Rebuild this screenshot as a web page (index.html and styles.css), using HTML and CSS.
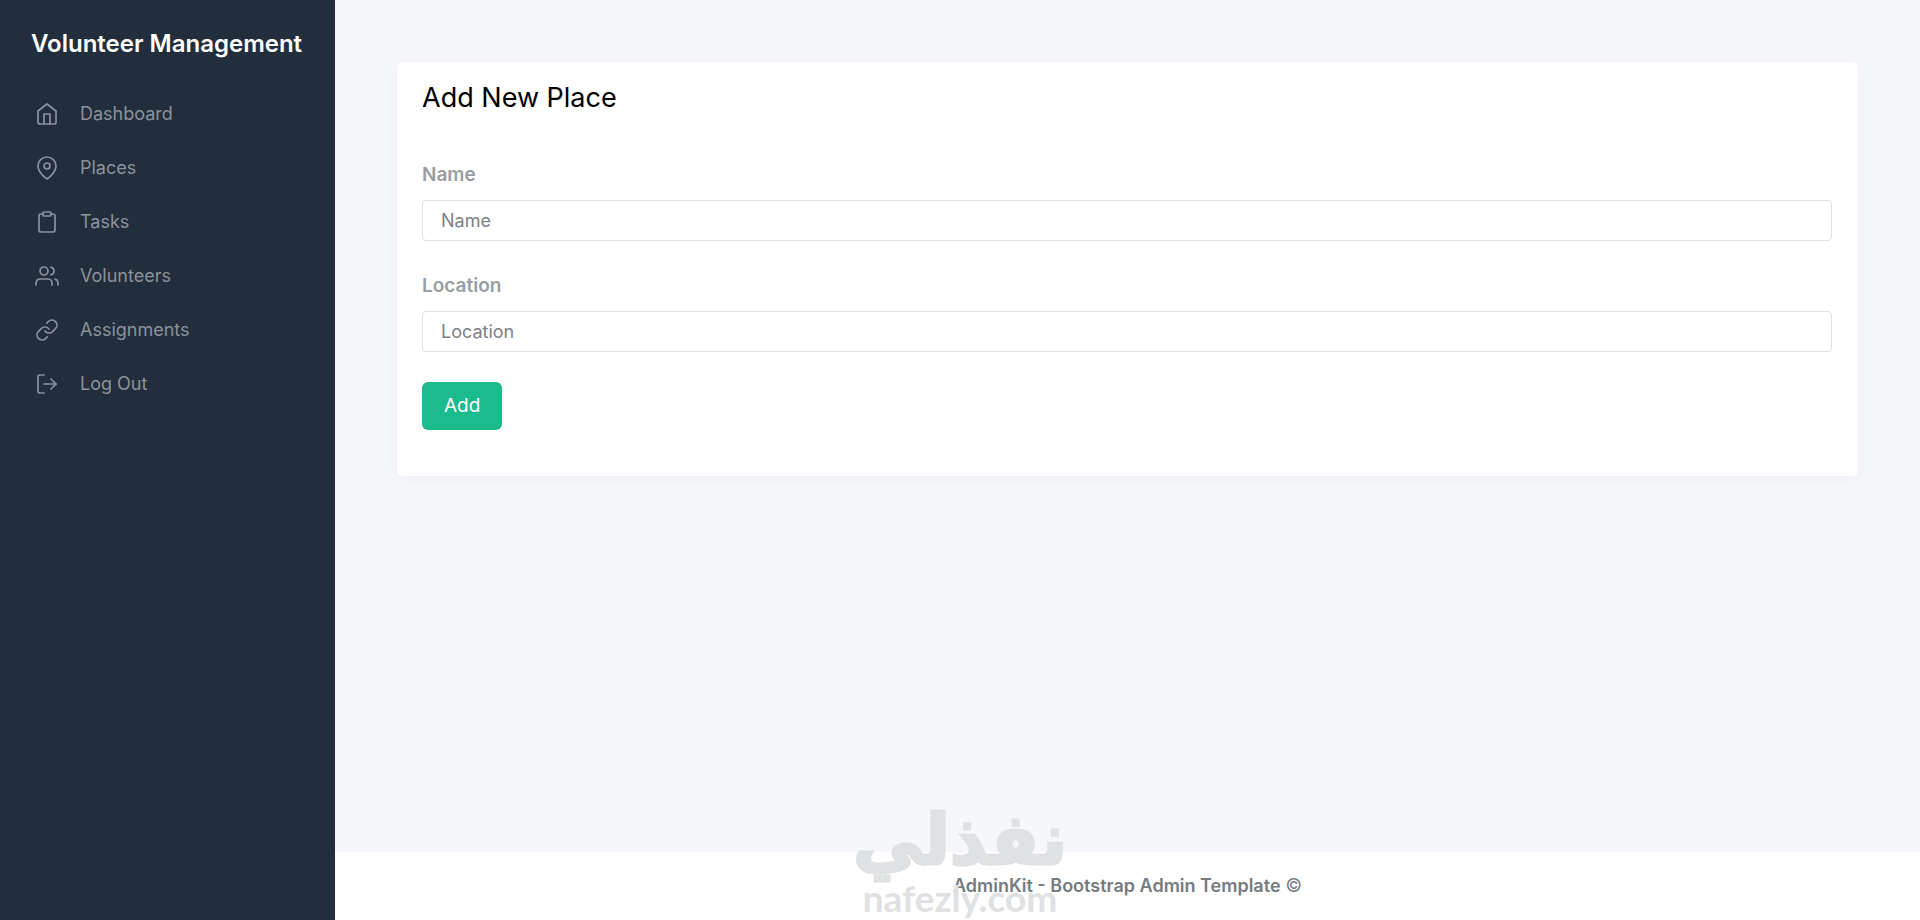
FILE: index.html
```
<!DOCTYPE html>
<html lang="en">
<head>
<meta charset="utf-8">
<meta name="viewport" content="width=device-width, initial-scale=1">

<title>Add New Place</title>

<link rel="stylesheet" href="styles.css">
</head>

<body>
<div class="wrapper">
  <nav class="sidebar">
    <a class="sidebar-brand" href="#">Volunteer Management</a>
    <ul class="sidebar-nav">
      <li>
        <a class="sidebar-link" href="#">
          <svg class="icon" viewBox="0 0 24 24"><path d="M3 9l9-7 9 7v11a2 2 0 0 1-2 2H5a2 2 0 0 1-2-2z"/><path d="M9 22V12h6v10"/></svg>
          <span>Dashboard</span>
        </a>
      </li>
      <li>
        <a class="sidebar-link" href="#">
          <svg class="icon" viewBox="0 0 24 24"><path d="M21 10c0 7-9 13-9 13s-9-6-9-13a9 9 0 0 1 18 0z"/><circle cx="12" cy="10" r="3"/></svg>
          <span>Places</span>
        </a>
      </li>
      <li>
        <a class="sidebar-link" href="#">
          <svg class="icon" viewBox="0 0 24 24"><path d="M16 4h2a2 2 0 0 1 2 2v14a2 2 0 0 1-2 2H6a2 2 0 0 1-2-2V6a2 2 0 0 1 2-2h2"/><rect x="8" y="2" width="8" height="4" rx="1"/></svg>
          <span>Tasks</span>
        </a>
      </li>
      <li>
        <a class="sidebar-link" href="#">
          <svg class="icon" viewBox="0 0 24 24"><path d="M17 21v-2a4 4 0 0 0-4-4H5a4 4 0 0 0-4 4v2"/><circle cx="9" cy="7" r="4"/><path d="M23 21v-2a4 4 0 0 0-3-3.87"/><path d="M16 3.13a4 4 0 0 1 0 7.75"/></svg>
          <span>Volunteers</span>
        </a>
      </li>
      <li>
        <a class="sidebar-link" href="#">
          <svg class="icon" viewBox="0 0 24 24"><path d="M10 13a5 5 0 0 0 7.54.54l3-3a5 5 0 0 0-7.07-7.07l-1.72 1.71"/><path d="M14 11a5 5 0 0 0-7.54-.54l-3 3a5 5 0 0 0 7.07 7.07l1.71-1.71"/></svg>
          <span>Assignments</span>
        </a>
      </li>
      <li>
        <a class="sidebar-link" href="#">
          <svg class="icon" viewBox="0 0 24 24"><path d="M9 21H5a2 2 0 0 1-2-2V5a2 2 0 0 1 2-2h4"/><path d="M16 17l5-5-5-5"/><path d="M21 12H9"/></svg>
          <span>Log Out</span>
        </a>
      </li>
    </ul>
  </nav>

  <div class="main">
    <main class="content">
      <div class="card">
        <h1 class="card-title">Add New Place</h1>
        <form class="place-form">
          <div class="form-group">
            <label for="name">Name</label>
            <input class="form-control" type="text" id="name" name="name" placeholder="Name">
          </div>
          <div class="form-group">
            <label for="location">Location</label>
            <input class="form-control" type="text" id="location" name="location" placeholder="Location">
          </div>
          <button class="btn" type="submit">Add</button>
        </form>
      </div>
    </main>

    <footer class="footer">
      <a href="#"><strong>AdminKit - Bootstrap Admin Template</strong> ©</a>
    </footer>
  </div>

  <div class="watermark">
    <span class="watermark-ar" lang="ar" dir="rtl">نفذلي</span>
    <span class="watermark-en">nafezly.com</span>
  </div>
</div>
</body>
</html>
```

FILE: styles.css
```
* {
  box-sizing: border-box;
}

body {
  margin: 0;
  font-family: Inter, "Liberation Sans", sans-serif;
  font-size: 18px;
  line-height: 28px;
  color: #757b80;
  background: #f5f7fb;
}

a {
  color: inherit;
  text-decoration: none;
}

.wrapper {
  position: relative;
  display: flex;
  min-height: 100vh;
}

/* sidebar */
.sidebar {
  flex: 0 0 335px;
  background: #222e3c;
}

.sidebar-brand {
  display: block;
  padding: 25px 31px 24px;
  font-size: 24px;
  font-weight: 600;
  line-height: 38px;
  color: #fff;
  white-space: nowrap;
}

.sidebar-nav {
  margin: 0;
  padding: 0;
  list-style: none;
}

.sidebar-link {
  display: flex;
  align-items: center;
  gap: 21px;
  padding: 13px 35px;
  color: #8b929b;
}

.icon {
  width: 24px;
  height: 24px;
  fill: none;
  stroke: currentColor;
  stroke-width: 1.7;
  stroke-linecap: round;
  stroke-linejoin: round;
}

/* main column */
.main {
  display: flex;
  flex: 1;
  flex-direction: column;
  min-width: 0;
}

.content {
  flex: 1;
  padding: 62px;
}

.card {
  padding: 19px 26px 46px 25px;
  border-radius: 5px;
  background: #fff;
  box-shadow: 0 5px 18px rgba(33, 37, 41, .03);
}

.card-title {
  margin: 0;
  font-size: 27px;
  font-weight: 400;
  line-height: 34px;
  color: #000;
}

.place-form {
  padding-top: 45px;
}

.form-group {
  display: flex;
  flex-direction: column;
  gap: 10px;
  margin-bottom: 30px;
}

.form-group label {
  font-size: 19px;
  font-weight: 600;
  line-height: 30px;
  color: #989da1;
}

.form-control {
  width: 100%;
  height: 41px;
  padding: 0 18px;
  border: 1px solid #dee0e3;
  border-radius: 4px;
  font: inherit;
  color: #495057;
  background: #fff;
}

.form-control::placeholder {
  color: #7e8184;
  opacity: 1;
}

.btn {
  height: 48px;
  padding: 0 22px;
  border: 0;
  border-radius: 6px;
  font: inherit;
  font-size: 19px;
  color: #fff;
  background: #1cbb8c;
}

.footer {
  padding: 20px 26px;
  text-align: center;
  background: #fff;
}

.footer strong {
  font-weight: 600;
}

/* watermark over the page */
.watermark {
  position: absolute;
  bottom: 0;
  left: 50%;
  display: flex;
  flex-direction: column;
  align-items: center;
  width: 216px;
  margin-left: -108px;
  color: #e0e1e2;
  pointer-events: none;
}

.watermark-ar {
  font-family: "DejaVu Sans", sans-serif;
  font-size: 70px;
  font-weight: 700;
  line-height: 70px;
  -webkit-text-stroke: 3px #e0e1e2;
}

.watermark-en {
  font-family: Lato, sans-serif;
  font-size: 37px;
  font-weight: 700;
  line-height: 45px;
}
```
